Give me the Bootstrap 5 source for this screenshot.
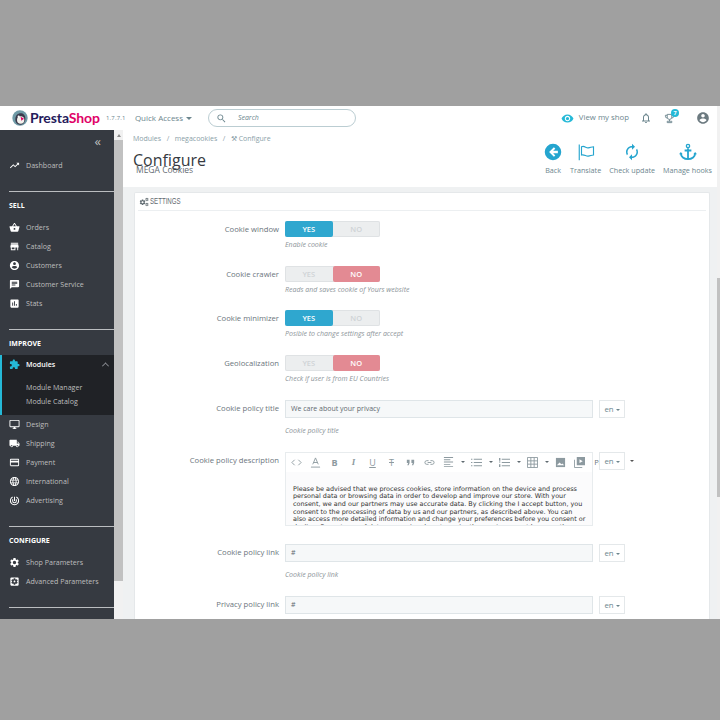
<!DOCTYPE html>
<html lang="en">
<head>
<meta charset="UTF-8">
<meta name="viewport" content="width=device-width, initial-scale=1.0">
<link href="https://cdn.jsdelivr.net/npm/bootstrap@5.3.3/dist/css/bootstrap.min.css" rel="stylesheet">
<title>Configure - MEGA Cookies</title>
<style>
html, body { height: 100%; }
body { background: #a0a0a0; font-family: "Open Sans", sans-serif; color: #6c757d; font-size: 8.5px; padding-top: 106px; overflow: hidden; }
svg { fill: currentColor; flex-shrink: 0; display: block; }
.ps-app { height: 513px; background: #fff; display: flex; flex-direction: column; position: relative; }

/* top bar */
.ps-top { height: 24px; background: #fff; padding-left: 12px; padding-right: 10px; }
.ps-logo { width: 16px; height: 16px; margin-right: 2px; }
.ps-brand { font-family: Lato, sans-serif; font-weight: 700; font-size: 14px; color: #251b5b; line-height: 1; letter-spacing: -.1px; }
.ps-brand span { color: #df0067; }
.ps-version { font-size: 6px; color: #6c868e; margin-left: 6px; letter-spacing: .2px; width: 29px; }
.ps-quick { font-size: 8px; color: #6c868e; width: 73px; }
.ps-caret { display: inline-block; border-top: 3px solid currentColor; border-left: 3px solid transparent; border-right: 3px solid transparent; vertical-align: middle; margin-left: 3px; }
.ps-search { width: 148px; height: 18px; border: 1px solid #bbcdd2; border-radius: 9px; padding-left: 7px; color: #6c868e; }
.ps-search i { font-size: 7px; margin-left: 11px; }
.ps-shop { color: #6c868e; font-size: 7.8px; }
.ps-shop svg { color: #25b9d7; margin-right: 5px; }
.ps-bell { color: #6c868e; margin-left: 11px; }
.ps-trophy { position: relative; margin: 0 21px 0 12px; color: #6c868e; }
.ps-pill { position: absolute; top: -4px; right: -4px; width: 8px; height: 8px; border-radius: 50%; background: #25b9d7; color: #fff; font-size: 5.5px; font-weight: 700; line-height: 8px; text-align: center; }
.ps-me { color: #6c7a80; }

/* layout */
.ps-main { flex: 1; display: flex; min-height: 0; }
.ps-side { width: 114px; background: #363a41; color: #bebebe; flex-shrink: 0; padding-top: 4px; }
.ps-collapse { height: 22px; padding: 1px 13px 0 0; text-align: right; font-size: 13px; line-height: 13px; color: #bebebe; }
.ps-link { height: 19px; padding-left: 9px; gap: 6px; font-size: 7.1px; color: #bebebe; }
.ps-link svg { color: #fff; width: 11px; height: 11px; }
.ps-rule { height: 1px; background: #bbbdc0; margin-left: 9px; margin-top: 16px; }
.ps-head { font-size: 7px; font-weight: 700; color: #fff; padding-left: 9px; height: 14px; line-height: 14px; margin-top: 7px; margin-bottom: 5px; }
.ps-head-tight { margin-bottom: 4px; }
.ps-open { background: #202226; border-left: 2px solid #25b9d7; }
.ps-open .ps-link { padding-left: 7px; color: #fff; font-weight: 600; }
.ps-open .ps-link svg { color: #25b9d7; }
.ps-sub { padding: 6px 0 7px 24px; line-height: 14px; font-size: 7.1px; }
.ps-chev { margin-left: auto; margin-right: 6px; width: 5px; height: 5px; border-left: 1px solid #8d9096; border-top: 1px solid #8d9096; transform: rotate(45deg) translate(1px, 1px); }

.ps-bar { width: 9px; background: #f1f1f1; flex-shrink: 0; display: flex; flex-direction: column; }
.ps-bar-arrow { height: 10px; display: flex; justify-content: center; padding-top: 4px; }
.ps-bar-arrow:before { content: ""; border-bottom: 3px solid #8a8a8a; border-left: 2.5px solid transparent; border-right: 2.5px solid transparent; height: 0; }
.ps-bar-thumb { height: 441px; background: #c1c1c1; }

.ps-body { flex: 1; background: #eff1f2; min-width: 0; display: flex; flex-direction: column; overflow: hidden; }
.ps-pagebar { position: absolute; right: 0; top: 0; bottom: 0; width: 3px; background: #f1f1f1; padding-top: 172px; }
.ps-pagebar div { height: 219px; background: #c1c1c1; }
.ps-pagehead { height: 57px; background: #fff; margin-right: 3px; padding: 4px 0 0 10px; position: relative; flex-shrink: 0; }
.ps-crumbs { font-size: 7px; color: #8aa0a8; gap: 5.5px; line-height: 10px; }
.ps-title { font-size: 16px; color: #363a41; line-height: 20px; margin: 6px 0 0; font-weight: 400; }
.ps-subtitle { font-size: 8.5px; color: #5f6a70; line-height: 10px; margin: -5px 0 0 3px; }
.ps-tools { position: absolute; right: 5px; top: 13px; gap: 8px; }
.ps-tool { display: flex; flex-direction: column; align-items: center; font-size: 7.2px; color: #6c868e; gap: 4px; line-height: 10px; }
.ps-tool svg { color: #25a5cf; width: 18px; height: 18px; }

/* settings card */
.ps-card { background: #fff; border: 1px solid #e5e8ea; border-bottom: 0; border-radius: 2px 2px 0 0; margin: 5px 10px 0 11px; flex: 1; padding: 0 3px; min-height: 0; overflow: hidden; }
.ps-cardhead { height: 18px; border-bottom: 1px solid #eceff1; font-family: "Liberation Sans", sans-serif; font-size: 8.5px; color: #5f6a70; gap: 1px; padding-left: 1px; }
.ps-cardtitle { display: inline-block; transform: scaleX(.72); transform-origin: left center; }
.ps-form { padding-top: 10px; }
.ps-row { display: flex; }
.ps-row-set { margin-bottom: 15.7px; }
.ps-row-field { margin-bottom: 16px; }
.ps-row-edit { margin-bottom: 18px; }
.ps-label { width: 147px; text-align: right; padding-right: 6px; font-size: 7.7px; color: #6c757d; line-height: 16px; flex-shrink: 0; }
.ps-help { font-size: 7px; font-style: italic; color: #8c9499; line-height: 10px; margin-top: 3px; }
.ps-switch { width: 95px; height: 16px; border-radius: 2px; display: flex; background: #eceeef; box-shadow: inset 0 0 0 1px #dfe2e4; font-size: 7.5px; font-weight: 600; color: #cfd3d6; text-align: center; line-height: 16px; }
.ps-switch div { flex: 1; }
.ps-on { background: #2fa7cf; color: #fff; border-radius: 2px; }
.ps-off { background: #e38a93; color: #fff; border-radius: 2px; }
.ps-field { width: 308px; height: 18px; background: #f6f8f9; border: 1px solid #dfe5e8; font-size: 7px; line-height: 16px; padding-left: 5px; color: #5f6a70; }
.ps-lang { width: 26px; height: 18px; margin-left: 6px; background: #fff; border: 1px solid #e4e8ea; font-size: 7.8px; color: #6c868e; line-height: 16px; text-align: center; position: relative; }
.ps-lang .ps-caret { margin-left: 2px; border-top-width: 2.5px; border-left-width: 2.5px; border-right-width: 2.5px; }
.ps-editor { width: 308px; height: 74px; border: 1px solid #e8ecee; background: #fff; }
.ps-etools { height: 19px; padding-left: 1px; color: #8d9aa0; white-space: nowrap; font-size: 9px; }
.ps-ebtn { width: 19px; flex-shrink: 0; display: flex; justify-content: center; align-items: center; line-height: 1; }
.ps-ebtn svg { width: 11px; height: 11px; }
.ps-ecaret { width: 9px; flex-shrink: 0; display: flex; justify-content: center; }
.ps-ecaret .ps-caret { margin: 0; border-top-color: #5f6a70; border-top-width: 2.5px; border-left-width: 2.5px; border-right-width: 2.5px; }
.ps-epage { font-size: 7.5px; color: #6c757d; }
.ps-etext { height: 53px; background: #fbfbfc; padding: 14px 3px 0 7px; font-family: "DejaVu Sans", sans-serif; font-size: 6.45px; line-height: 7.6px; color: #333; overflow: hidden; }
.ps-stray { position: absolute; left: 30px; top: 7px; border-top: 2.5px solid #555; border-left: 2.5px solid transparent; border-right: 2.5px solid transparent; }
</style>
</head>
<body>

<svg width="0" height="0" class="position-absolute">
  <symbol id="i-trend" viewBox="0 0 24 24"><path d="M16 6l2.29 2.29-4.88 4.88-4-4L2 16.59 3.41 18l6-6 4 4 6.3-6.29L22 12V6z"/></symbol>
  <symbol id="i-basket" viewBox="0 0 24 24"><path d="M17.21 9l-4.38-6.56c-.19-.28-.51-.42-.83-.42-.32 0-.64.14-.83.43L6.79 9H2c-.55 0-1 .45-1 1 0 .09.01.18.04.27l2.54 9.27c.23.84 1 1.46 1.92 1.46h13c.92 0 1.69-.62 1.93-1.46l2.54-9.27L23 10c0-.55-.45-1-1-1h-4.79zM9 9l3-4.4L15 9H9zm3 8c-1.1 0-2-.9-2-2s.9-2 2-2 2 .9 2 2-.9 2-2 2z"/></symbol>
  <symbol id="i-store" viewBox="0 0 24 24"><path d="M20 4H4v2h16V4zm1 10v-2l-1-5H4l-1 5v2h1v6h10v-6h4v6h2v-6h1zm-9 4H6v-4h6v4z"/></symbol>
  <symbol id="i-user" viewBox="0 0 24 24"><path d="M12 2C6.48 2 2 6.48 2 12s4.48 10 10 10 10-4.48 10-10S17.52 2 12 2zm0 3c1.66 0 3 1.34 3 3s-1.34 3-3 3-3-1.34-3-3 1.34-3 3-3zm0 14.2c-2.5 0-4.71-1.28-6-3.22.03-1.99 4-3.08 6-3.08 1.99 0 5.97 1.09 6 3.08-1.29 1.94-3.5 3.22-6 3.22z"/></symbol>
  <symbol id="i-chat" viewBox="0 0 24 24"><path d="M20 2H4c-1.1 0-1.99.9-1.99 2L2 22l4-4h14c1.1 0 2-.9 2-2V4c0-1.1-.9-2-2-2zM6 9h12v2H6V9zm8 5H6v-2h8v2zm4-6H6V6h12v2z"/></symbol>
  <symbol id="i-stats" viewBox="0 0 24 24"><path d="M19 3H5c-1.1 0-2 .9-2 2v14c0 1.1.9 2 2 2h14c1.1 0 2-.9 2-2V5c0-1.1-.9-2-2-2zM9 17H7v-7h2v7zm4 0h-2V7h2v10zm4 0h-2v-4h2v4z"/></symbol>
  <symbol id="i-puzzle" viewBox="0 0 24 24"><path d="M20.5 11H19V7c0-1.1-.9-2-2-2h-4V3.5C13 2.12 11.88 1 10.5 1S8 2.12 8 3.5V5H4c-1.1 0-1.99.9-1.99 2v3.8H3.5c1.49 0 2.7 1.21 2.7 2.7s-1.21 2.7-2.7 2.7H2V20c0 1.1.9 2 2 2h3.8v-1.5c0-1.49 1.21-2.7 2.7-2.7 1.49 0 2.7 1.21 2.7 2.7V22H17c1.1 0 2-.9 2-2v-4h1.5c1.38 0 2.5-1.12 2.5-2.5S21.88 11 20.5 11z"/></symbol>
  <symbol id="i-desktop" viewBox="0 0 24 24"><path d="M21 2H3c-1.1 0-2 .9-2 2v12c0 1.1.9 2 2 2h7v2H8v2h8v-2h-2v-2h7c1.1 0 2-.9 2-2V4c0-1.1-.9-2-2-2zm0 14H3V4h18v12z"/></symbol>
  <symbol id="i-truck" viewBox="0 0 24 24"><path d="M20 8h-3V4H3c-1.1 0-2 .9-2 2v11h2c0 1.66 1.34 3 3 3s3-1.34 3-3h6c0 1.66 1.34 3 3 3s3-1.34 3-3h2v-5l-3-4zM6 18.5c-.83 0-1.5-.67-1.5-1.5s.67-1.5 1.5-1.5 1.5.67 1.5 1.5-.67 1.5-1.5 1.5zm13.5-9l1.96 2.5H17V9.5h2.5zm-1.5 9c-.83 0-1.5-.67-1.5-1.5s.67-1.5 1.5-1.5 1.5.67 1.5 1.5-.67 1.5-1.5 1.5z"/></symbol>
  <symbol id="i-card" viewBox="0 0 24 24"><path d="M20 4H4c-1.11 0-1.99.89-1.99 2L2 18c0 1.11.89 2 2 2h16c1.11 0 2-.89 2-2V6c0-1.11-.89-2-2-2zm0 14H4v-6h16v6zm0-10H4V6h16v2z"/></symbol>
  <symbol id="i-globe" viewBox="0 0 24 24"><path d="M11.99 2C6.47 2 2 6.48 2 12s4.47 10 9.99 10C17.52 22 22 17.52 22 12S17.52 2 11.99 2zm6.93 6h-2.95c-.32-1.25-.78-2.45-1.38-3.56 1.84.63 3.37 1.91 4.33 3.56zM12 4.04c.83 1.2 1.48 2.53 1.91 3.96h-3.82c.43-1.43 1.08-2.76 1.91-3.96zM4.26 14C4.1 13.36 4 12.69 4 12s.1-1.36.26-2h3.38c-.08.66-.14 1.32-.14 2 0 .68.06 1.34.14 2H4.26zm.82 2h2.95c.32 1.25.78 2.45 1.38 3.56-1.84-.63-3.37-1.9-4.33-3.56zm2.95-8H5.08c.96-1.66 2.49-2.93 4.33-3.56C8.81 5.55 8.35 6.75 8.03 8zM12 19.96c-.83-1.2-1.48-2.53-1.91-3.96h3.82c-.43 1.43-1.08 2.76-1.91 3.96zM14.34 14H9.66c-.09-.66-.16-1.32-.16-2 0-.68.07-1.35.16-2h4.68c.09.65.16 1.32.16 2 0 .68-.07 1.34-.16 2zm.25 5.56c.6-1.11 1.06-2.31 1.38-3.56h2.95c-.96 1.65-2.49 2.93-4.33 3.56zM16.36 14c.08-.66.14-1.32.14-2 0-.68-.06-1.34-.14-2h3.38c.16.64.26 1.31.26 2s-.1 1.36-.26 2h-3.38z"/></symbol>
  <symbol id="i-ads" viewBox="0 0 24 24"><path fill="none" stroke="currentColor" stroke-width="2.2" d="M8 4.2A9 9 0 1 0 16 4.2M8 9v4a4 4 0 0 0 8 0V9M12 4v9"/></symbol>
  <symbol id="i-gear" viewBox="0 0 24 24"><path d="M19.14 12.94c.04-.3.06-.61.06-.94 0-.32-.02-.64-.07-.94l2.03-1.58c.18-.14.23-.41.12-.61l-1.92-3.32c-.12-.22-.37-.29-.59-.22l-2.39.96c-.5-.38-1.03-.7-1.62-.94l-.36-2.54c-.04-.24-.24-.41-.48-.41h-3.84c-.24 0-.43.17-.47.41l-.36 2.54c-.59.24-1.13.57-1.62.94l-2.39-.96c-.22-.08-.47 0-.59.22L2.74 8.87c-.12.21-.08.47.12.61l2.03 1.58c-.05.3-.09.63-.09.94s.02.64.07.94l-2.03 1.58c-.18.14-.23.41-.12.61l1.92 3.32c.12.22.37.29.59.22l2.39-.96c.5.38 1.03.7 1.62.94l.36 2.54c.05.24.24.41.48.41h3.84c.24 0 .44-.17.47-.41l.36-2.54c.59-.24 1.13-.56 1.62-.94l2.39.96c.22.08.47 0 .59-.22l1.92-3.32c.12-.22.07-.47-.12-.61l-2.01-1.58zM12 15.6c-1.98 0-3.6-1.62-3.6-3.6s1.62-3.6 3.6-3.6 3.6 1.62 3.6 3.6-1.62 3.6-3.6 3.6z"/></symbol>
  <symbol id="i-gears" viewBox="0 0 24 24"><use href="#i-gear" width="17" height="17" x="0" y="4"/><use href="#i-gear" width="10" height="10" x="14" y="1"/><use href="#i-gear" width="10" height="10" x="14" y="13"/></symbol>
  <symbol id="i-gearbox" viewBox="0 0 24 24"><path d="M12 10c-1.1 0-2 .9-2 2s.9 2 2 2 2-.9 2-2-.9-2-2-2zm7-7H5c-1.11 0-2 .9-2 2v14c0 1.1.89 2 2 2h14c1.11 0 2-.9 2-2V5c0-1.1-.89-2-2-2zm-1.75 9c0 .23-.02.46-.05.68l1.48 1.16c.13.11.17.3.08.45l-1.4 2.42c-.09.15-.27.21-.43.15l-1.74-.7c-.36.28-.76.51-1.18.69l-.26 1.85c-.03.17-.18.3-.35.3h-2.8c-.17 0-.32-.13-.35-.29l-.26-1.85c-.43-.18-.82-.41-1.18-.69l-1.74.7c-.16.06-.34 0-.43-.15l-1.4-2.42c-.09-.15-.05-.34.08-.45l1.48-1.16c-.03-.23-.05-.46-.05-.69 0-.23.02-.46.05-.68l-1.48-1.16c-.13-.11-.17-.3-.08-.45l1.4-2.42c.09-.15.27-.21.43-.15l1.74.7c.36-.28.76-.51 1.18-.69l.26-1.85c.03-.17.18-.3.35-.3h2.8c.17 0 .32.13.35.29l.26 1.85c.43.18.82.41 1.18.69l1.74-.7c.16-.06.34 0 .43.15l1.4 2.42c.09.15.05.34-.08.45l-1.48 1.16c.03.23.05.46.05.69z"/></symbol>
  <symbol id="i-eye" viewBox="0 0 24 24"><path d="M12 4.5C7 4.5 2.73 7.61 1 12c1.73 4.39 6 7.5 11 7.5s9.27-3.11 11-7.5c-1.73-4.39-6-7.5-11-7.5zM12 17c-2.76 0-5-2.24-5-5s2.24-5 5-5 5 2.24 5 5-2.24 5-5 5zm0-8c-1.66 0-3 1.34-3 3s1.34 3 3 3 3-1.34 3-3-1.34-3-3-3z"/></symbol>
  <symbol id="i-bell" viewBox="0 0 24 24"><path d="M12 22c1.1 0 2-.9 2-2h-4c0 1.1.9 2 2 2zm6-6v-5c0-3.07-1.63-5.64-4.5-6.32V4c0-.83-.67-1.5-1.5-1.5s-1.5.67-1.5 1.5v.68C7.64 5.36 6 7.92 6 11v5l-2 2v1h16v-1l-2-2zm-2 1H8v-6c0-2.48 1.51-4.5 4-4.5s4 2.02 4 4.5v6z"/></symbol>
  <symbol id="i-search" viewBox="0 0 24 24"><path d="M15.5 14h-.79l-.28-.27C15.41 12.59 16 11.11 16 9.5 16 5.91 13.09 3 9.5 3S3 5.91 3 9.5 5.91 16 9.5 16c1.61 0 3.09-.59 4.23-1.57l.27.28v.79l5 4.99L20.49 19l-4.99-5zm-6 0C7.01 14 5 11.99 5 9.5S7.01 5 9.5 5 14 7.01 14 9.5 11.99 14 9.5 14z"/></symbol>
  <symbol id="i-trophy" viewBox="0 0 24 24"><path fill="none" stroke="currentColor" stroke-width="2" d="M7 3h10v6a5 5 0 0 1-10 0zM7 5H3v2a4 4 0 0 0 4 4M17 5h4v2a4 4 0 0 1-4 4M12 14v4M7 21h10v-3H7z"/></symbol>
  <symbol id="i-back" viewBox="0 0 24 24"><path fill-rule="evenodd" d="M12 1a11 11 0 1 0 0 22 11 11 0 0 0 0-22zm1.2 4.6 1.9 1.9-2.9 2.9h6.3v3.2h-6.3l2.9 2.9-1.9 1.9L6.800 12z"/></symbol>
  <symbol id="i-flag" viewBox="0 0 24 24"><path fill="none" stroke="currentColor" stroke-width="1.5" d="M3 2v21M6 5c4-2 6 2 9 1.500s5-1.500 7-1.500v11c-2 0-4 1-7 1.500S10 15 6 16z"/></symbol>
  <symbol id="i-refresh" viewBox="0 0 24 24"><path d="M12 6v3l4-4-4-4v3c-4.420 0-8 3.580-8 8 0 1.570.46 3.030 1.240 4.260L6.700 14.800c-.45-.83-.7-1.790-.7-2.800 0-3.310 2.690-6 6-6zm6.760 1.740L17.300 9.200c.44.84.7 1.790.7 2.800 0 3.310-2.690 6-6 6v-3l-4 4 4 4v-3c4.420 0 8-3.580 8-8 0-1.570-.46-3.030-1.240-4.260z"/></symbol>
  <symbol id="i-anchor" viewBox="0 0 24 24"><path fill="none" stroke="currentColor" stroke-width="2.400" d="M12 7v15M7.500 10h9M2.500 14c0 4 4 7.500 9.500 7.500s9.500-3.500 9.500-7.500"/><circle cx="12" cy="4" r="2.200" fill="none" stroke="currentColor" stroke-width="1.800"/><path d="M0 15l2.500-3 2.500 3zM19 15l2.500-3 2.500 3z"/></symbol>
</svg>

<div class="ps-app">

  <!-- TOP BAR -->
  <header class="ps-top d-flex align-items-center">
    <svg class="ps-logo" viewBox="0 0 24 24"><circle cx="12" cy="12" r="11.500" fill="#6f9aa6"/><path d="M5 14c0-6 4-9 8-9s7 3 7 8c0 5-3 9-8 9-4 0-7-3-7-8z" fill="#3a3a4c"/><circle cx="13" cy="15" r="5.500" fill="#f3f1ec"/><path d="M13 10l5 3-4 3z" fill="#df0067"/><circle cx="10" cy="10" r="1.600" fill="#fff"/></svg>
    <div class="ps-brand">Presta<span>Shop</span></div>
    <div class="ps-version">1.7.7.1</div>
    <div class="ps-quick">Quick Access<span class="ps-caret"></span></div>
    <div class="ps-search d-flex align-items-center"><svg width="11" height="11"><use href="#i-search"/></svg><i>Search</i></div>
    <div class="ps-shop d-flex align-items-center ms-auto"><svg width="13" height="13"><use href="#i-eye"/></svg>View my shop</div>
    <svg class="ps-bell" width="12" height="12"><use href="#i-bell"/></svg>
    <div class="ps-trophy"><svg width="11" height="11"><use href="#i-trophy"/></svg><span class="ps-pill">7</span></div>
    <svg class="ps-me" width="14" height="14"><use href="#i-user"/></svg>
  </header>

  <div class="ps-main">

    <!-- SIDEBAR -->
    <nav class="ps-side">
      <div class="ps-collapse">&#171;</div>
      <div class="ps-link d-flex align-items-center"><svg><use href="#i-trend"/></svg>Dashboard</div>
      <div class="ps-rule"></div>

      <div class="ps-head">SELL</div>
      <div class="ps-link d-flex align-items-center"><svg><use href="#i-basket"/></svg>Orders</div>
      <div class="ps-link d-flex align-items-center"><svg><use href="#i-store"/></svg>Catalog</div>
      <div class="ps-link d-flex align-items-center"><svg><use href="#i-user"/></svg>Customers</div>
      <div class="ps-link d-flex align-items-center"><svg><use href="#i-chat"/></svg>Customer Service</div>
      <div class="ps-link d-flex align-items-center"><svg><use href="#i-stats"/></svg>Stats</div>
      <div class="ps-rule"></div>

      <div class="ps-head ps-head-tight">IMPROVE</div>
      <div class="ps-open">
        <div class="ps-link d-flex align-items-center"><svg><use href="#i-puzzle"/></svg>Modules<span class="ps-chev"></span></div>
        <div class="ps-sub">Module Manager<br>Module Catalog</div>
      </div>
      <div class="ps-link d-flex align-items-center"><svg><use href="#i-desktop"/></svg>Design</div>
      <div class="ps-link d-flex align-items-center"><svg><use href="#i-truck"/></svg>Shipping</div>
      <div class="ps-link d-flex align-items-center"><svg><use href="#i-card"/></svg>Payment</div>
      <div class="ps-link d-flex align-items-center"><svg><use href="#i-globe"/></svg>International</div>
      <div class="ps-link d-flex align-items-center"><svg><use href="#i-ads"/></svg>Advertising</div>
      <div class="ps-rule"></div>

      <div class="ps-head">CONFIGURE</div>
      <div class="ps-link d-flex align-items-center"><svg><use href="#i-gear"/></svg>Shop Parameters</div>
      <div class="ps-link d-flex align-items-center"><svg><use href="#i-gearbox"/></svg>Advanced Parameters</div>
      <div class="ps-rule"></div>
    </nav>

    <div class="ps-bar"><div class="ps-bar-arrow"></div><div class="ps-bar-thumb"></div></div>

    <!-- CONTENT -->
    <main class="ps-body">
      <div class="ps-pagehead">
        <div class="ps-crumbs d-flex"><span>Modules</span><span>/</span><span>megacookies</span><span>/</span><span>&#9874; Configure</span></div>
        <h1 class="ps-title">Configure</h1>
        <div class="ps-subtitle">MEGA Cookies</div>
        <div class="ps-tools d-flex">
          <div class="ps-tool"><svg><use href="#i-back"/></svg>Back</div>
          <div class="ps-tool"><svg><use href="#i-flag"/></svg>Translate</div>
          <div class="ps-tool"><svg><use href="#i-refresh"/></svg>Check update</div>
          <div class="ps-tool"><svg><use href="#i-anchor"/></svg>Manage hooks</div>
        </div>
      </div>

      <section class="ps-card">
        <div class="ps-cardhead d-flex align-items-center"><svg width="10" height="10"><use href="#i-gears"/></svg><span class="ps-cardtitle">SETTINGS</span></div>
        <div class="ps-form">

          <div class="ps-row ps-row-set">
            <div class="ps-label">Cookie window</div>
            <div><div class="ps-switch"><div class="ps-on">YES</div><div>NO</div></div><div class="ps-help">Enable cookie</div></div>
          </div>
          <div class="ps-row ps-row-set">
            <div class="ps-label">Cookie crawler</div>
            <div><div class="ps-switch"><div>YES</div><div class="ps-off">NO</div></div><div class="ps-help">Reads and saves cookie of Yours website</div></div>
          </div>
          <div class="ps-row ps-row-set">
            <div class="ps-label">Cookie minimizer</div>
            <div><div class="ps-switch"><div class="ps-on">YES</div><div>NO</div></div><div class="ps-help">Posible to change settings after accept</div></div>
          </div>
          <div class="ps-row ps-row-set">
            <div class="ps-label">Geolocalization</div>
            <div><div class="ps-switch"><div>YES</div><div class="ps-off">NO</div></div><div class="ps-help">Check if user is from EU Countries</div></div>
          </div>

          <div class="ps-row ps-row-field">
            <div class="ps-label">Cookie policy title</div>
            <div><div class="d-flex"><div class="ps-field">We care about your privacy</div><div class="ps-lang">en<span class="ps-caret"></span></div></div><div class="ps-help mt-2">Cookie policy title</div></div>
          </div>

          <div class="ps-row ps-row-edit">
            <div class="ps-label">Cookie policy description</div>
            <div class="d-flex">
              <div class="ps-editor">
                <div class="ps-etools d-flex align-items-center">
                  <div class="ps-ebtn"><svg viewBox="0 0 12 12"><path fill="none" stroke="currentColor" d="M4 3 1 6l3 3M8 3l3 3-3 3"/></svg></div>
                  <div class="ps-ebtn"><svg viewBox="0 0 12 12"><path fill="none" stroke="currentColor" d="M3 8l3-7 3 7M4 6h4"/><path d="M1 10.500h10v1H1z"/></svg></div>
                  <div class="ps-ebtn"><b>B</b></div>
                  <div class="ps-ebtn"><i style="font-family:'Liberation Serif',serif"><b>I</b></i></div>
                  <div class="ps-ebtn"><u>U</u></div>
                  <div class="ps-ebtn"><s>T</s></div>
                  <div class="ps-ebtn"><svg viewBox="0 0 12 12"><path d="M2 3h3v3.500L4 9H2.500l1-2.500H2zM7 3h3v3.500L9 9H7.500l1-2.500H7z"/></svg></div>
                  <div class="ps-ebtn"><svg viewBox="0 0 12 12"><path fill="none" stroke="currentColor" d="M5 4H3a2 2 0 0 0 0 4h2M7 4h2a2 2 0 0 1 0 4H7M4 6h4"/></svg></div>
                  <div class="ps-ebtn"><svg viewBox="0 0 12 12"><path d="M1 0h10v1H1zM1 2.500h7v1H1zM1 5h10v1H1zM1 7.500h7v1H1zM1 10h10v1H1z"/></svg></div>
                  <div class="ps-ecaret"><span class="ps-caret"></span></div>
                  <div class="ps-ebtn"><svg viewBox="0 0 12 12"><path d="M3 2h9v1H3zM3 5.500h9v1H3zM3 9h9v1H3zM0 2h1.500v1H0zM0 5.500h1.500v1H0zM0 9h1.500v1H0z"/></svg></div>
                  <div class="ps-ecaret"><span class="ps-caret"></span></div>
                  <div class="ps-ebtn"><svg viewBox="0 0 12 12"><path d="M3 2h9v1H3zM3 5.500h9v1H3zM3 9h9v1H3zM0 1h1.500v3H0zM0 5h1.500v1H0zM0 8h1.500v3H0z"/></svg></div>
                  <div class="ps-ecaret"><span class="ps-caret"></span></div>
                  <div class="ps-ebtn"><svg viewBox="0 0 12 12"><path fill="none" stroke="currentColor" d="M.5.500h11v11H.5zM4.200.500v11M7.800.500v11M.5 4.200h11M.5 7.800h11"/></svg></div>
                  <div class="ps-ecaret"><span class="ps-caret"></span></div>
                  <div class="ps-ebtn"><svg viewBox="0 0 12 12"><path d="M1 1h10v10H1z"/><path d="M2 9l3-3 2 2 1-1 2 2z" fill="#fff"/></svg></div>
                  <div class="ps-ebtn"><svg viewBox="0 0 12 12"><path d="M3 0h9v9H3z"/><path d="M6 2.500 9.500 4.500 6 6.500z" fill="#fff"/><path fill="none" stroke="currentColor" d="M.5 3v8.500H9"/></svg></div>
                  <div class="ps-ebtn ps-epage">Pa</div>
                </div>
                <div class="ps-etext">Please be advised that we process cookies, store information on the device and process personal data or browsing data in order to develop and improve our store. With your consent, we and our partners may use accurate data. By clicking the I accept button, you consent to the processing of data by us and our partners, as described above. You can<br>also access more detailed information and change your preferences before you consent or decline. Some types of data processing do not require the user's consent because they</div>
              </div>
              <div><div class="ps-lang">en<span class="ps-caret"></span><span class="ps-stray"></span></div></div>
            </div>
          </div>

          <div class="ps-row ps-row-field">
            <div class="ps-label">Cookie policy link</div>
            <div><div class="d-flex"><div class="ps-field">#</div><div class="ps-lang">en<span class="ps-caret"></span></div></div><div class="ps-help mt-2">Cookie policy link</div></div>
          </div>

          <div class="ps-row">
            <div class="ps-label">Privacy policy link</div>
            <div class="d-flex"><div class="ps-field">#</div><div class="ps-lang">en<span class="ps-caret"></span></div></div>
          </div>

        </div>
      </section>
    </main>
  </div>
  <div class="ps-pagebar"><div></div></div>
</div>

<script src="https://cdn.jsdelivr.net/npm/bootstrap@5.3.3/dist/js/bootstrap.bundle.min.js"></script>
</body>
</html>
